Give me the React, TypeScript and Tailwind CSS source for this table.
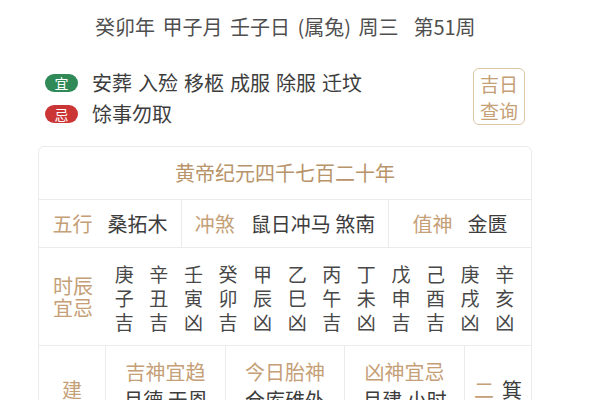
import React from "react";

const tan = "text-[#c5a077]";
const dark = "text-[#3d3d3d]";

const hours = [
  ["庚", "子", "吉"],
  ["辛", "丑", "吉"],
  ["壬", "寅", "凶"],
  ["癸", "卯", "吉"],
  ["甲", "辰", "凶"],
  ["乙", "巳", "凶"],
  ["丙", "午", "吉"],
  ["丁", "未", "凶"],
  ["戊", "申", "吉"],
  ["己", "酉", "吉"],
  ["庚", "戌", "凶"],
  ["辛", "亥", "凶"],
];

export default function App() {
  return (
    <div
      className="w-[600px] h-[400px] overflow-hidden bg-white"
      style={{ fontFamily: '"Noto Sans CJK SC", "Noto Sans", sans-serif' }}
    >
      {/* top line */}
      <div className="pt-[13px] pl-[95px] text-[20px] leading-[28px] text-[#4f4f4f] whitespace-pre [word-spacing:3px]">
        癸卯年 甲子月 壬子日 (属兔) 周三  第51周
      </div>

      {/* yi / ji */}
      <div className="mt-[26px] flex">
        <div className="pl-[45px] flex flex-col">
          <div className="flex items-center h-[31px]">
            <span className="w-[33px] h-[18px] rounded-full bg-[#2f8a57] text-white text-[14px] leading-[18px] flex items-center justify-center">
              宜
            </span>
            <span className="ml-[14px] text-[20px] text-[#3d3d3d] whitespace-pre [word-spacing:1.5px]">
              安葬 入殓 移柩 成服 除服 迁坟
            </span>
          </div>
          <div className="flex items-center h-[31px]">
            <span className="w-[33px] h-[18px] rounded-full bg-[#cc3535] text-white text-[14px] leading-[18px] flex items-center justify-center">
              忌
            </span>
            <span className="ml-[14px] text-[20px] text-[#3d3d3d]">馀事勿取</span>
          </div>
        </div>
        <div className="ml-auto mr-[75px] mt-[1px] w-[52px] h-[57px] border border-[#dcc7a8] rounded-[6px] flex flex-col items-center justify-center text-[19px] leading-[27px] text-[#c5a077]">
          <span>吉日</span>
          <span>查询</span>
        </div>
      </div>

      {/* table */}
      <div className="mt-[17px] ml-[38px] w-[494px] border border-[#ebebeb] rounded-[6px] text-[20px]">
        <div className="h-[53px] flex items-center justify-center border-b border-[#ebebeb] text-[#b8946a]">
          黄帝纪元四千七百二十年
        </div>
        <div className="h-[48px] grid grid-cols-[143px_207px_1fr] border-b border-[#ebebeb]">
          <div className="flex items-center justify-center gap-[15px] border-r border-[#ebebeb]">
            <span className={tan}>五行</span>
            <span className={dark}>桑拓木</span>
          </div>
          <div className="flex items-center justify-center gap-[16px] border-r border-[#ebebeb]">
            <span className={tan}>冲煞</span>
            <span className={`${dark} whitespace-pre`}>鼠日冲马 煞南</span>
          </div>
          <div className="flex items-center justify-center gap-[15px]">
            <span className={tan}>值神</span>
            <span className={dark}>金匮</span>
          </div>
        </div>
        <div className="h-[98px] flex items-center border-b border-[#ebebeb]">
          <div className={`w-[68px] flex flex-col items-center leading-[22px] ${tan}`}>
            <span>时辰</span>
            <span>宜忌</span>
          </div>
          <div className="w-[415px] pt-[2px] grid grid-cols-12 text-[19px] leading-[24px] text-[#484848]">
            {hours.map((h, i) => (
              <div key={i} className="flex flex-col items-center">
                <span>{h[0]}</span>
                <span>{h[1]}</span>
                <span>{h[2]}</span>
              </div>
            ))}
          </div>
        </div>
        <div className="h-[88px] grid grid-cols-[67px_120px_119px_120px_1fr]">
          <div className={`flex items-center justify-center border-r border-[#ebebeb] ${tan}`}>建</div>
          <div className="flex flex-col items-center pt-[12px] leading-[28px] border-r border-[#ebebeb]">
            <span className={tan}>吉神宜趋</span>
            <span className={`${dark} whitespace-pre`}>月德 天恩</span>
          </div>
          <div className="flex flex-col items-center pt-[12px] leading-[28px] border-r border-[#ebebeb]">
            <span className={tan}>今日胎神</span>
            <span className={dark}>仓库碓外</span>
          </div>
          <div className="flex flex-col items-center pt-[12px] leading-[28px] border-r border-[#ebebeb]">
            <span className={tan}>凶神宜忌</span>
            <span className={`${dark} whitespace-pre`}>月建 小时</span>
          </div>
          <div className="flex items-center justify-center gap-[8px]">
            <span className={tan}>二</span>
            <span className={dark}>箕</span>
          </div>
        </div>
      </div>
    </div>
  );
}
